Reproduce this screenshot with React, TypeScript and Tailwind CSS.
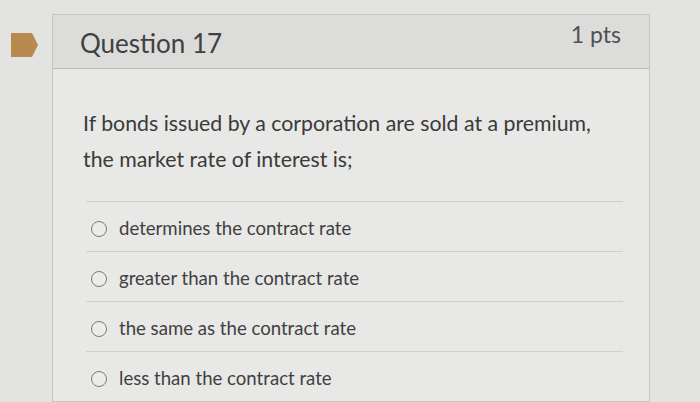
import React from 'react';

const answers = [
  'determines the contract rate',
  'greater than the contract rate',
  'the same as the contract rate',
  'less than the contract rate',
];

const App: React.FC = () => {
  return (
    <div
      className="relative h-[402px] w-[700px] overflow-hidden bg-[#e3e3e1]"
      style={{ fontFamily: 'Lato, "Open Sans", sans-serif' }}
    >
      {/* flag marker */}
      <svg className="absolute left-[11px] top-[33px]" width="28" height="24" viewBox="0 0 28 24">
        <path d="M0 0 H21 L27 12 L21 24 H0 Z" fill="#b98a50" />
      </svg>

      <div className="ml-[52px] mt-[14px] w-[598px] border border-[#c6c6c4] bg-[#e8e8e6]">
        {/* header */}
        <div className="flex h-[54px] items-start justify-between border-b border-[#bdbdbb] bg-[#dcdcda] pl-[27px] pr-[28px]">
          <div className="mt-[13px] text-[26px] leading-[30px] text-[#404040]">Question 17</div>
          <div className="mt-[5px] text-[23px] leading-[28px] text-[#505050]">1 pts</div>
        </div>

        {/* body */}
        <div className="pl-[30px] pt-[36px]">
          <div className="text-[21.3px] leading-[36px] text-[#3a3a3a]">
            <p>If bonds issued by a corporation are sold at a premium,</p>
            <p>the market rate of interest is;</p>
          </div>

          <div className="mt-[24px] ml-[3px] w-[537px]">
            {answers.map((a) => (
              <div key={a} className="flex h-[50px] items-center gap-[12px] border-t border-[#cfcfcd] pl-[5px] pt-[4px]">
                <span className="h-[16px] w-[16px] rounded-full border-[1.5px] border-[#7a7a7a] bg-[#ececea]" />
                <span className="text-[18.6px] text-[#404040]">{a}</span>
              </div>
            ))}
          </div>
        </div>
      </div>
    </div>
  );
};

export default App;
